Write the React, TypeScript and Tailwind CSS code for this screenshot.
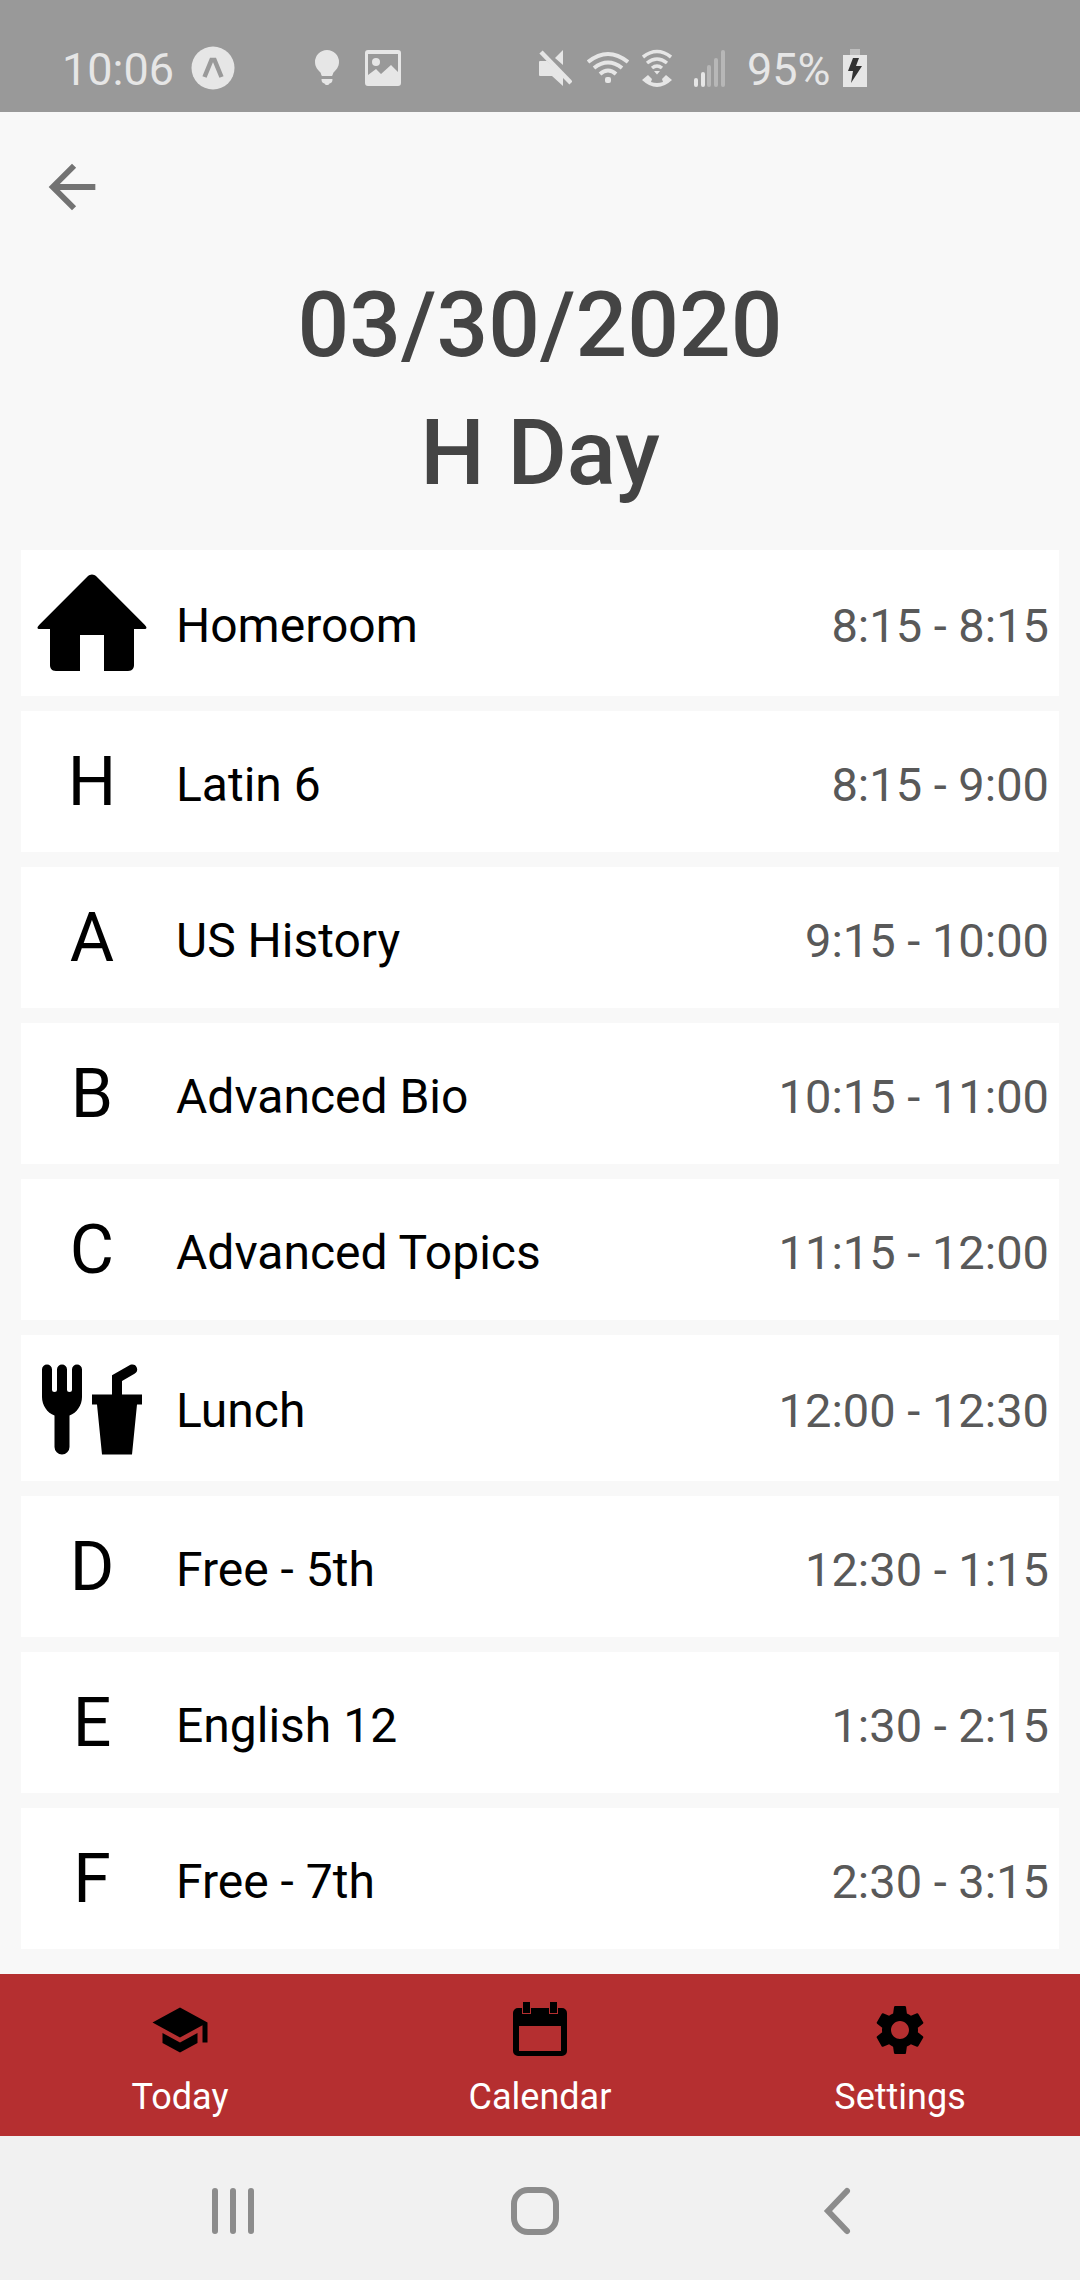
import type { ReactNode } from "react";
import { MdArrowBack, MdSchool, MdSettings } from "react-icons/md";

type Period = { badge: ReactNode; tall?: boolean; name: string; time: string };

function HomeIcon() {
  return (
    <svg viewBox="0 0 20 20" className="size-[120px]" fill="currentColor" aria-hidden="true">
      <path d="M18.672 11H17v6c0 .445-.194 1-1 1h-4v-6H8v6H4c-.806 0-1-.555-1-1v-6H1.328c-.598 0-.47-.324-.06-.748L9.292 2.22c.195-.202.451-.302.708-.312.257.01.513.109.708.312l8.023 8.031c.411.425.539.749-.059.749z" />
    </svg>
  );
}

function LunchIcon() {
  return (
    <svg viewBox="0 -0.3 24 24" className="size-[120px]" fill="currentColor" aria-hidden="true">
      <path d="M3 3a1 1 0 0 0-1 1v5.5c0 1.69 1.03 3.13 2.5 3.72v6.28a1.5 1.5 0 0 0 3 0v-6.28C8.97 12.63 10 11.19 10 9.5V4a1 1 0 0 0-2 0v4a.5.5 0 0 1-1 0V4a1 1 0 0 0-2 0v4a.5.5 0 0 1-1 0V4a1 1 0 0 0-1-1z" />
      <path d="M19.88 3c-.13.02-.26.06-.38.13L16 5.15V9h-4v2h1l1 10h6l1-10h1V9h-4V6.3l2.5-1.43a1 1 0 0 0-.62-1.87z" />
    </svg>
  );
}

function CalendarIcon() {
  return (
    <svg viewBox="0 0 60 60" className="size-[60px]" fill="currentColor" aria-hidden="true">
      <path
        fillRule="evenodd"
        d="M8 8h4v6h9V8h18v6h9V8h4a5 5 0 0 1 5 5v38a5 5 0 0 1-5 5H8a5 5 0 0 1-5-5V13a5 5 0 0 1 5-5zM9 26v25h42V26z"
      />
      <path d="M13 2h7v11h-7zM40 2h7v11h-7z" />
    </svg>
  );
}

const periods: Period[] = [
  { badge: <HomeIcon />, tall: true, name: "Homeroom", time: "8:15 - 8:15" },
  { badge: "H", name: "Latin 6", time: "8:15 - 9:00" },
  { badge: "A", name: "US History", time: "9:15 - 10:00" },
  { badge: "B", name: "Advanced Bio", time: "10:15 - 11:00" },
  { badge: "C", name: "Advanced Topics", time: "11:15 - 12:00" },
  { badge: <LunchIcon />, tall: true, name: "Lunch", time: "12:00 - 12:30" },
  { badge: "D", name: "Free - 5th", time: "12:30 - 1:15" },
  { badge: "E", name: "English 12", time: "1:30 - 2:15" },
  { badge: "F", name: "Free - 7th", time: "2:30 - 3:15" },
];

const tabs = [
  { label: "Today", icon: <MdSchool className="size-[60px]" /> },
  { label: "Calendar", icon: <CalendarIcon /> },
  { label: "Settings", icon: <MdSettings className="size-[60px]" /> },
];

function StatusBar() {
  return (
    <div className="flex h-28 items-end bg-[#999999] pb-[19px] pl-[62px] text-[#e6e6e6]">
      <div className="flex h-[50px] items-center">
        <span className="w-[112px] pt-1 text-[45px] leading-[50px]">10:06</span>
        <svg viewBox="0 0 44 44" className="ml-[17px] size-11" aria-hidden="true">
          <circle cx="22" cy="22" r="21.5" fill="currentColor" />
          <path d="M13.500 31 20.500 14h3L30.500 31" fill="none" stroke="#999999" strokeWidth="4.500" />
        </svg>
        <svg viewBox="0 0 24 36" className="ml-20 h-9 w-6" fill="currentColor" aria-hidden="true">
          <path d="M12 0A12 12 0 0 0 0 12c0 5 3 8 5 10 1.500 1.500 1 4 2.500 4h9c1.500 0 1-2.500 2.500-4 2-2 5-5 5-10A12 12 0 0 0 12 0zM6.500 29h11c0 3-1 4-3 4.500-1 2-4 2-5 0-2-.5-3-1.500-3-4.500z" />
        </svg>
        <svg viewBox="0 0 36 36" className="ml-[26px] size-9" aria-hidden="true">
          <path
            fill="currentColor"
            fillRule="evenodd"
            d="M3 0h30a3 3 0 0 1 3 3v30a3 3 0 0 1-3 3H3a3 3 0 0 1-3-3V3a3 3 0 0 1 3-3zm0 4v21l8-6 5 5 10-9 7 7V4z"
          />
          <circle cx="11" cy="12" r="4" fill="currentColor" />
        </svg>
        <svg viewBox="0 0 34 38" className="ml-[137px] h-[38px] w-[34px]" fill="currentColor" aria-hidden="true">
          <path d="M2 12h7l16 15v10L14 27H2a1 1 0 0 1-1-1V13a1 1 0 0 1 1-1zM25 1v15l-8-7z" />
          <path d="M3 3l30 31" stroke="currentColor" strokeWidth="4.500" />
        </svg>
        <svg viewBox="0 0 42 34" className="ml-[15px] h-[34px] w-[42px]" fill="none" stroke="currentColor" strokeWidth="4" aria-hidden="true">
          <path d="M1 11Q21-5 41 11M7 17Q21 6 35 17M13 23Q21 16 29 23" />
          <rect x="18" y="26" width="6" height="6" rx="2" fill="currentColor" stroke="none" />
        </svg>
        <svg viewBox="0 0 30 38" className="ml-[13px] h-[38px] w-[30px]" fill="none" stroke="currentColor" strokeWidth="3.500" aria-hidden="true">
          <path d="M1 8Q15-3 29 8M5 14Q15 6 25 14M10 19Q15 15 20 19" />
          <path d="M12 22h6l-3 3.500z" fill="currentColor" stroke="none" />
          <path d="M0 31l6-5 4 4-1 3q6 2 12 0l-1-3 4-4 6 5q-15 14-30 0z" fill="currentColor" stroke="none" />
        </svg>
        <svg viewBox="0 0 31 38" className="ml-[22px] h-[38px] w-[31px]" fill="currentColor" aria-hidden="true">
          <rect x="0" y="29" width="4" height="9" rx="2" />
          <rect x="7" y="23" width="4" height="15" rx="2" />
          <g opacity="0.4">
            <rect x="13" y="16" width="4" height="22" rx="2" />
            <rect x="20" y="9" width="4" height="29" rx="2" />
            <rect x="27" y="1" width="4" height="37" rx="2" />
          </g>
        </svg>
        <span className="ml-[22px] w-[84px] pt-1 text-[45px] leading-[50px]">95%</span>
        <svg viewBox="0 0 24 38" className="ml-3 h-[38px] w-6" fill="currentColor" aria-hidden="true">
          <path d="M7 0h10v6H7z" opacity="0.5" />
          <path d="M0 6h24v32H0z" />
          <path d="M10 9h6l-3 8h6L8 34l2-12H5z" fill="#333333" />
        </svg>
      </div>
    </div>
  );
}

export default function App() {
  return (
    <div className="flex min-h-screen flex-col bg-[#f8f8f8] font-['Roboto',sans-serif] text-black">
      <StatusBar />
      <header className="flex h-[149px] items-center pl-[37px]">
        <button type="button" aria-label="Back" className="text-[#737373]">
          <MdArrowBack className="size-[70px]" />
        </button>
      </header>
      <main className="flex-1">
        <h1 className="text-center text-[91px] leading-32 font-medium text-[#444444]">
          03/30/2020
          <br />
          H Day
        </h1>
        <ul className="mx-[21px] mt-[33px] mb-[25px] flex flex-col gap-[15px]">
          {periods.map((p) => (
            <li
              key={p.name}
              className={`flex items-center bg-white pr-[10px] pl-[11px] ${p.tall ? "h-[146px]" : "h-[141px]"}`}
            >
              <div className="flex w-[120px] shrink-0 justify-center text-[68px] leading-20">{p.badge}</div>
              <div className="flex flex-1 items-center justify-between pt-[6px] pl-6">
                <span className="text-[48px] leading-14">{p.name}</span>
                <span className="text-[47px] leading-14 text-[#595959]">{p.time}</span>
              </div>
            </li>
          ))}
        </ul>
      </main>
      <nav className="grid h-[162px] grid-cols-3 bg-[#b52f30]">
        {tabs.map((t) => (
          <button key={t.label} type="button" className="flex flex-col items-center pt-[26px]">
            {t.icon}
            <span className="mt-[17px] text-[36px] leading-10 text-white">{t.label}</span>
          </button>
        ))}
      </nav>
      <div className="flex h-36 items-center justify-between bg-[#f1f1f1] pt-[6px] pr-[218px] pl-[208px] text-[#8c8c8c]">
        <button type="button" aria-label="Recent apps">
          <svg viewBox="0 0 50 50" className="size-[50px]" fill="none" stroke="currentColor" strokeWidth="6" strokeLinecap="round">
            <path d="M7 5v40M25 5v40M43 5v40" />
          </svg>
        </button>
        <button type="button" aria-label="Home">
          <svg viewBox="0 0 50 50" className="size-[50px]" fill="none" stroke="currentColor" strokeWidth="6">
            <rect x="4" y="4" width="42" height="42" rx="14" />
          </svg>
        </button>
        <button type="button" aria-label="Back navigation">
          <svg viewBox="0 0 50 50" className="size-[50px]" fill="none" stroke="currentColor" strokeWidth="6" strokeLinecap="round">
            <path d="M35 5L16 25l19 20" />
          </svg>
        </button>
      </div>
    </div>
  );
}
